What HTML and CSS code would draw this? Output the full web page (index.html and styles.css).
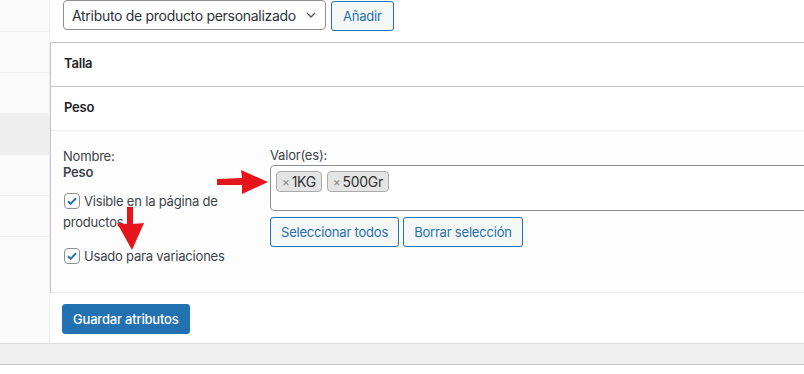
FILE: index.html
```html
<!DOCTYPE html>
<html lang="es">
<head>
<meta charset="utf-8">
<title>Atributos</title>
<link rel="stylesheet" href="styles.css">
</head>
<body>
<div class="screen">
  <div class="layout">
    <ul class="tabs">
      <li class="tab tab-first"></li>
      <li class="tab"></li>
      <li class="tab"></li>
      <li class="tab tab-active"></li>
      <li class="tab"></li>
      <li class="tab"></li>
    </ul>
    <div class="main">
      <div class="toolbar">
        <div class="select">
          <span class="select-text">Atributo de producto personalizado</span>
          <svg class="chevron" width="10" height="6" viewBox="0 0 10 6"><path d="M1 1l4 4 4-4" fill="none" stroke="#50575e" stroke-width="1.3"/></svg>
        </div>
        <button class="btn">Añadir</button>
      </div>
      <div class="attrs">
        <div class="attr">
          <h3 class="attr-head">Talla</h3>
        </div>
        <div class="attr">
          <h3 class="attr-head">Peso</h3>
          <div class="attr-body">
            <div class="col-name">
              <span class="name-label">Nombre:</span>
              <strong class="name-value">Peso</strong>
              <label class="check-row check-row-first"><span class="checkbox"><svg width="14" height="14" viewBox="0 0 14 14"><path d="M3 7.2l2.6 2.7L11 4.2" fill="none" stroke="#2271b1" stroke-width="2"/></svg></span>Visible en la página de productos</label>
              <label class="check-row check-row-second"><span class="checkbox"><svg width="14" height="14" viewBox="0 0 14 14"><path d="M3 7.2l2.6 2.7L11 4.2" fill="none" stroke="#2271b1" stroke-width="2"/></svg></span>Usado para variaciones</label>
            </div>
            <div class="col-values">
              <span class="values-label">Valor(es):</span>
              <div class="values-box">
                <span class="tag"><span class="tag-x">×</span>1KG</span>
                <span class="tag"><span class="tag-x">×</span>500Gr</span>
              </div>
              <div class="values-actions">
                <button class="btn">Seleccionar todos</button>
                <button class="btn">Borrar selección</button>
              </div>
            </div>
          </div>
        </div>
      </div>
      <div class="save-bar">
        <button class="btn-primary">Guardar atributos</button>
      </div>
    </div>
  </div>
  <div class="footer-band"></div>
  <svg class="arrows" width="804" height="374" viewBox="0 0 804 374">
    <polygon points="217,179 242,178 241,170 268,182 242,194 242,185 217,185" fill="#e6141b"/>
    <polygon points="127,207 133,207 133,224 144,223 132,250 117,223 127,224" fill="#e6141b"/>
  </svg>
</div>
</body>
</html>
```

FILE: styles.css
```css
body {
  margin: 0;
  background: #fff;
  font-family: Inter, "Liberation Sans", Arial, sans-serif;
  font-size: 13px;
  letter-spacing: -0.2px;
  color: #3c434a;
}

.screen {
  position: relative;
  width: 804px;
  height: 374px;
  overflow: hidden;
}

.layout {
  display: flex;
  height: 343px;
}

.tabs {
  list-style: none;
  margin: 0;
  padding: 0;
  width: 49px;
  flex: none;
  background: #fafafa;
  border-right: 1px solid #eee;
}

.tab {
  height: 40px;
  border-bottom: 1px solid #eee;
}

.tab-first {
  height: 31px;
}

.tab-active {
  background: #eee;
}

.main {
  flex: 1;
  min-width: 0;
  display: flex;
  flex-direction: column;
}

.toolbar {
  box-sizing: border-box;
  height: 42px;
  display: flex;
  align-items: flex-start;
  gap: 5px;
  padding-left: 13px;
}

.select {
  box-sizing: border-box;
  width: 263px;
  height: 30px;
  border: 1px solid #8c8f94;
  border-radius: 4px;
  padding: 0 9px 0 8px;
  display: flex;
  align-items: center;
  justify-content: space-between;
  gap: 6px;
  font-size: 14px;
  letter-spacing: -0.3px;
  color: #2c3338;
  background: #fff;
}

.select-text {
  white-space: nowrap;
  overflow: hidden;
}

.chevron {
  display: block;
  flex: none;
}

.btn {
  box-sizing: border-box;
  height: 30px;
  margin: 0;
  border: 1px solid #2271b1;
  border-radius: 3px;
  background: #f6f7f7;
  color: #2271b1;
  padding: 0 10px;
  font-family: inherit;
  font-size: 13px;
  letter-spacing: -0.2px;
  line-height: 28px;
  white-space: nowrap;
}

.toolbar .btn {
  margin-top: 1px;
  padding: 0 11px;
}

.attrs {
  border-left: 1px solid #c3c4c7;
}

.attr {
  border-top: 1px solid #c3c4c7;
}

.attr-head {
  box-sizing: border-box;
  margin: 0;
  height: 43px;
  display: flex;
  align-items: center;
  padding: 0 0 3px 13px;
  font-size: 13px;
  font-weight: 600;
  color: #1d2327;
}

.attr-body {
  box-sizing: border-box;
  height: 163px;
  display: flex;
  padding-left: 12px;
  background: #fdfdfd;
  border-top: 1px solid #eee;
  border-bottom: 1px solid #eee;
}

.col-name {
  box-sizing: border-box;
  width: 207px;
  flex: none;
  padding: 17px 37px 0 0;
}

.name-label,
.name-value {
  display: block;
  line-height: 16px;
}

.name-value {
  font-weight: 600;
}

.check-row {
  display: block;
  line-height: 21px;
}

.check-row-first {
  margin-top: 11px;
}

.check-row-second {
  margin-top: 13px;
}

.checkbox {
  box-sizing: border-box;
  display: inline-flex;
  align-items: center;
  justify-content: center;
  width: 16px;
  height: 16px;
  margin: 2px 4px 0 1px;
  vertical-align: top;
  border: 1px solid #8c8f94;
  border-radius: 4px;
  background: #fff;
}

.col-values {
  flex: 1;
  min-width: 0;
  padding-top: 16px;
}

.values-label {
  display: block;
  line-height: 16px;
}

.values-box {
  box-sizing: border-box;
  width: 560px;
  height: 46px;
  margin-top: 2px;
  padding: 5px;
  display: flex;
  align-items: flex-start;
  gap: 5px;
  border: 1px solid #8c8f94;
  border-radius: 4px;
  background: #fff;
}

.tag {
  box-sizing: border-box;
  height: 21px;
  display: flex;
  align-items: center;
  gap: 2px;
  padding: 0 5px;
  border: 1px solid #aaa;
  border-radius: 4px;
  background: #e4e4e4;
  color: #333;
  font-size: 14px;
  letter-spacing: -0.3px;
}

.tag-x {
  color: #888;
  font-size: 12px;
}

.values-actions {
  display: flex;
  gap: 4px;
  margin-top: 6px;
}

.save-bar {
  flex: 1;
  padding: 11px 0 0 12px;
}

.btn-primary {
  box-sizing: border-box;
  height: 30px;
  margin: 0;
  padding: 0 10px;
  border: 1px solid #2271b1;
  border-radius: 3px;
  background: #2271b1;
  color: #fff;
  font-family: inherit;
  font-size: 13px;
  font-weight: 500;
  letter-spacing: -0.2px;
}

.footer-band {
  height: 20px;
  background: #f0f0f1;
  border-top: 1px solid #dcdcde;
  border-bottom: 1px solid #c3c4c7;
}

.arrows {
  position: absolute;
  top: 0;
  left: 0;
  pointer-events: none;
}
```
